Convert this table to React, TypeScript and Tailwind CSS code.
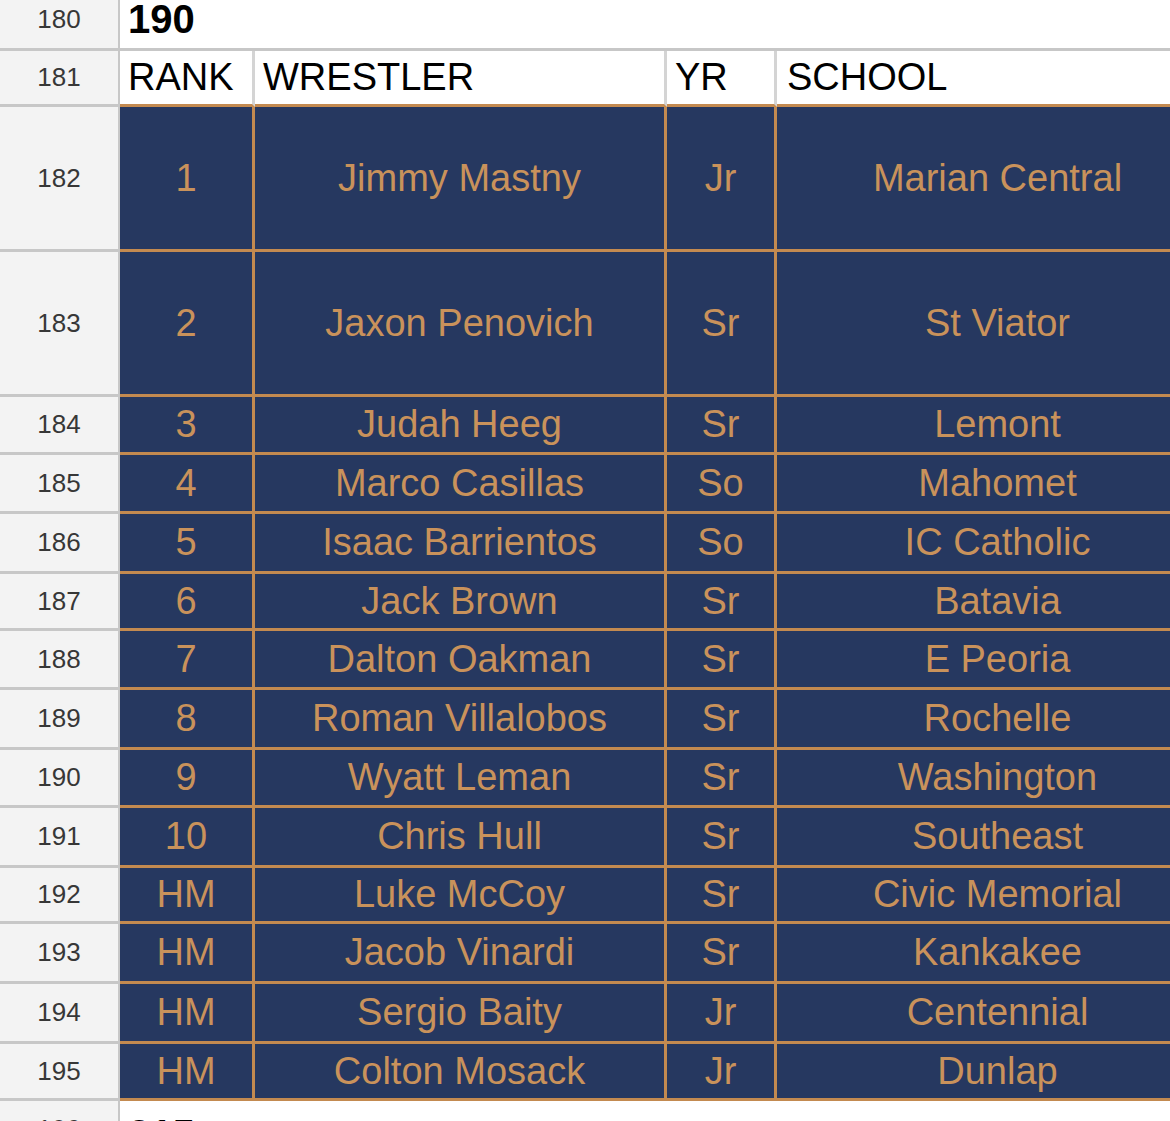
import React, { FC } from "react";

interface Wrestler {
  num: number;
  h: string;
  rank: string;
  name: string;
  yr: string;
  school: string;
}

const wrestlers: Wrestler[] = [
  { num: 182, h: "h-[145px]", rank: "1", name: "Jimmy Mastny", yr: "Jr", school: "Marian Central" },
  { num: 183, h: "h-[145px]", rank: "2", name: "Jaxon Penovich", yr: "Sr", school: "St Viator" },
  { num: 184, h: "h-[58px]", rank: "3", name: "Judah Heeg", yr: "Sr", school: "Lemont" },
  { num: 185, h: "h-[59px]", rank: "4", name: "Marco Casillas", yr: "So", school: "Mahomet" },
  { num: 186, h: "h-[60px]", rank: "5", name: "Isaac Barrientos", yr: "So", school: "IC Catholic" },
  { num: 187, h: "h-[57px]", rank: "6", name: "Jack Brown", yr: "Sr", school: "Batavia" },
  { num: 188, h: "h-[59px]", rank: "7", name: "Dalton Oakman", yr: "Sr", school: "E Peoria" },
  { num: 189, h: "h-[60px]", rank: "8", name: "Roman Villalobos", yr: "Sr", school: "Rochelle" },
  { num: 190, h: "h-[58px]", rank: "9", name: "Wyatt Leman", yr: "Sr", school: "Washington" },
  { num: 191, h: "h-[60px]", rank: "10", name: "Chris Hull", yr: "Sr", school: "Southeast" },
  { num: 192, h: "h-[56px]", rank: "HM", name: "Luke McCoy", yr: "Sr", school: "Civic Memorial" },
  { num: 193, h: "h-[60px]", rank: "HM", name: "Jacob Vinardi", yr: "Sr", school: "Kankakee" },
  { num: 194, h: "h-[60px]", rank: "HM", name: "Sergio Baity", yr: "Jr", school: "Centennial" },
  { num: 195, h: "h-[57px]", rank: "HM", name: "Colton Mosack", yr: "Jr", school: "Dunlap" },
];

const RowHead: FC<{ num: number }> = ({ num }) => (
  <div className="flex w-[120px] shrink-0 items-center justify-center border-r-2 border-b-[3px] border-[#c7c7c7] bg-[#f3f3f3] text-[26px] text-[#373737]">
    {num}
  </div>
);

const dataCell =
  "flex shrink-0 items-center justify-center border-r-[3px] border-b-[3px] border-[#c38a50] bg-[#263860] text-[38px] text-[#c9925b]";
const headCell =
  "flex shrink-0 items-center border-r-[3px] border-r-[#d4d4d4] border-b-[3px] border-b-[#c38a50] bg-white pl-2 text-[38px] text-black";

const App: FC = () => {
  return (
    <div className="h-[1121px] w-[1170px] overflow-hidden bg-white font-['Liberation_Sans',Arial,sans-serif]">
      <div className="-mt-[10px] flex w-[1400px] flex-col">
        {/* weight class title */}
        <div className="flex h-[61px]">
          <RowHead num={180} />
          <div className="flex flex-1 items-center border-b-[3px] border-[#c7c7c7] pl-2 text-[40px] font-bold text-black">
            190
          </div>
        </div>

        {/* column headers */}
        <div className="flex h-[56px]">
          <RowHead num={181} />
          <div className={`${headCell} w-[135px]`}>RANK</div>
          <div className={`${headCell} w-[412px]`}>WRESTLER</div>
          <div className={`${headCell} w-[110px]`}>YR</div>
          <div className={`${headCell} w-[444px] pl-[10px]`}>SCHOOL</div>
        </div>

        {wrestlers.map((w) => (
          <div key={w.num} className={`flex ${w.h}`}>
            <RowHead num={w.num} />
            <div className={`${dataCell} w-[135px]`}>{w.rank}</div>
            <div className={`${dataCell} w-[412px]`}>{w.name}</div>
            <div className={`${dataCell} w-[110px]`}>{w.yr}</div>
            <div className={`${dataCell} w-[444px]`}>{w.school}</div>
          </div>
        ))}

        {/* next weight class */}
        <div className="flex h-[60px]">
          <RowHead num={196} />
          <div className="flex flex-1 items-center pl-2 pt-[6px] text-[40px] font-bold text-black">215</div>
        </div>
      </div>
    </div>
  );
};

export default App;
